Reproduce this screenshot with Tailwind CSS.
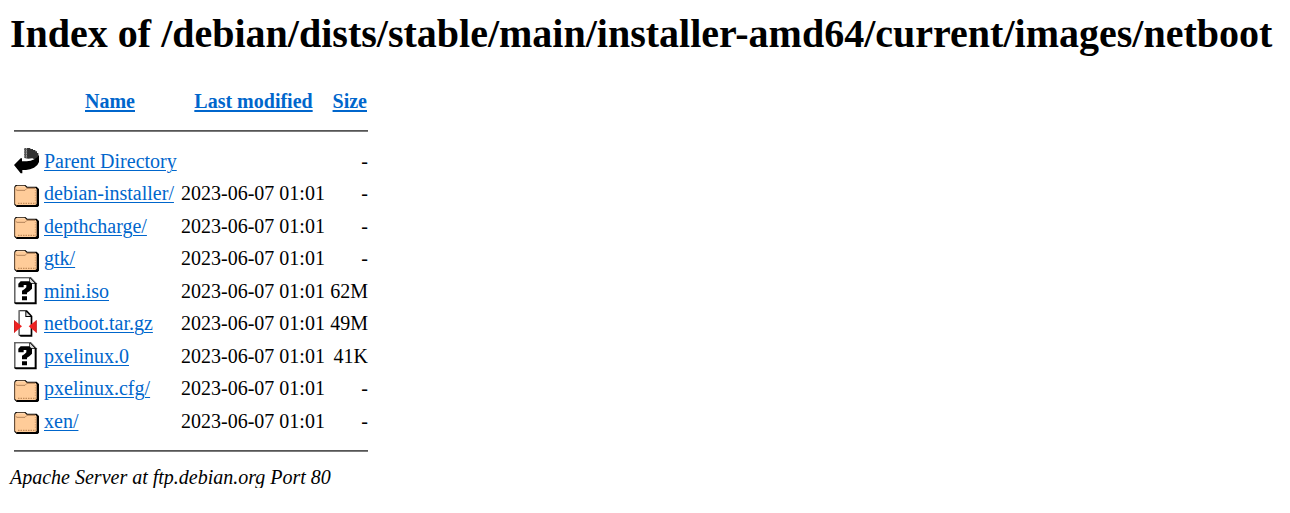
<!DOCTYPE html>
<html lang="en">
<head>
<meta charset="utf-8">
<title>Index of /debian/dists/stable/main/installer-amd64/current/images/netboot</title>
<script src="https://cdn.jsdelivr.net/npm/@tailwindcss/browser@4"></script>
</head>
<body class="bg-white text-black font-['Liberation_Serif','Times_New_Roman',serif] text-[20px] leading-[22px] pl-[10px]">
<svg class="hidden">
  <symbol id="back" viewBox="0 0 75 82.5">
    <path d="M30 3H49V6H57V9H64V13H69V18H73V36L67 40L55 34L43 35L31 33Z" fill="#333"/>
    <path d="M30 3H40V32H31Z" fill="#666"/>
    <path d="M31 4V32M37 4V31" stroke="#fff" stroke-width="2" stroke-dasharray="2 3"/>
    <path d="M34 4V32M41 4V34" stroke="#222" stroke-width="2" stroke-dasharray="3 2"/>
    <path d="M0 54L20 34H24V43H38L50 41L61 37L70 31L75 23V45L70 54L60 62L48 67L36 69H25V79H20Z" fill="#000"/>
  </symbol>
  <symbol id="folder" viewBox="0 0 75 82.5">
    <path d="M5 15H34L40 20H68L75 27V77L71 81H8L1 74V20Z" fill="#000"/>
    <path d="M4 20L9 17H32L38 23H64L68 28V72L64 75H7L3 71V26Z" fill="#ffcc99"/>
    <path d="M2 23V71L8 77" fill="none" stroke="#6b5038" stroke-width="3"/>
    <path d="M5 28L9 31H33L39 25H63" fill="none" stroke="#a5764e" stroke-width="2.5"/>
    <path d="M8 19H32" stroke="#ffe2c4" stroke-width="2"/>
    <path d="M12 70H64" stroke="#a36c3c" stroke-width="4" stroke-dasharray="2 3"/>
    <path d="M64 31V67" stroke="#c88d5c" stroke-width="3" stroke-dasharray="2 3"/>
  </symbol>
  <symbol id="unknown" viewBox="0 0 75 82.5">
    <path d="M0 0H50L68 19V82.5H6L0 78Z" fill="#000"/>
    <path d="M4 4H46V21H62V76H4Z" fill="#fff"/>
    <path d="M48 4L62 19H48Z" fill="#ddd"/>
    <path d="M1.500 0V77M0 1.500H50L67 19" fill="none" stroke="#666" stroke-width="3"/>
    <path d="M13 31V20L20 13H46L54 20V35L46 43L39 47V52H24V41L32 36L37 31V24H29V31Z" fill="#000"/>
    <path d="M24 58H39V70H24Z" fill="#000"/>
  </symbol>
  <symbol id="compressed" viewBox="0 0 75 82.5">
    <path d="M14 1H39L55 18V80H20L14 76Z" fill="#000"/>
    <path d="M18 4H34V21H50V74H18Z" fill="#fff"/>
    <path d="M37 6L49 18H37Z" fill="#ddd"/>
    <path d="M16 1V76" fill="none" stroke="#777" stroke-width="4"/>
    <path d="M0 30L24 49L0 69Z" fill="#e22"/>
    <path d="M68 30L44 49L68 69Z" fill="#e22"/>
    <path d="M1 31V68M67 31V68" fill="none" stroke="#a22" stroke-width="2"/>
  </symbol>
</svg>
<h1 class="pt-[11px] h-[90px] text-[40px] leading-[45px] font-bold whitespace-nowrap">Index of /debian/dists/stable/main/installer-amd64/current/images/netboot</h1>
<main class="ml-[4px] w-[354px]">
  <div class="grid grid-cols-[192px_95px_67px] h-[40px] font-bold text-[#0066cc] whitespace-nowrap">
    <div class="text-center"><a class="underline decoration-2 underline-offset-2">Name</a></div>
    <div class="flex justify-center"><a class="underline decoration-2 underline-offset-2">Last modified</a></div>
    <div class="text-right pr-px"><a class="underline decoration-2 underline-offset-2">Size</a></div>
  </div>
  <div class="h-[2px] bg-[#7c7c7c] border-t border-[#555] mb-[15px]"></div>
  <div id="rows"></div>
  <div class="h-[2px] bg-[#7c7c7c] border-t border-[#555] mt-[10.5px]"></div>
</main>
<address class="pt-[14px] italic whitespace-nowrap">Apache Server at ftp.debian.org Port 80</address>
<script>
const rows = [
  ['back', 'Parent Directory', '', '-'],
  ['folder', 'debian-installer/', 1, '-'],
  ['folder', 'depthcharge/', 1, '-'],
  ['folder', 'gtk/', 1, '-'],
  ['unknown', 'mini.iso', 1, '62M'],
  ['compressed', 'netboot.tar.gz', 1, '49M'],
  ['unknown', 'pxelinux.0', 1, '41K'],
  ['folder', 'pxelinux.cfg/', 1, '-'],
  ['folder', 'xen/', 1, '-']
];
document.getElementById('rows').innerHTML = rows.map(([icon, name, date, size]) => `
  <div class="grid grid-cols-[30px_137px_145px_42px] h-[32.5px] items-start whitespace-nowrap">
    <svg class="w-[25px] h-[27.5px]"><use href="#${icon}"/></svg>
    <a class="mt-[2.75px] text-[#0066cc] underline decoration-1 underline-offset-2">${name}</a>
    <span class="mt-[2.75px]">${date ? '2023-06-07 01:01' : ''}</span>
    <span class="mt-[2.75px] text-right">${size}</span>
  </div>`).join('');
</script>
</body>
</html>
